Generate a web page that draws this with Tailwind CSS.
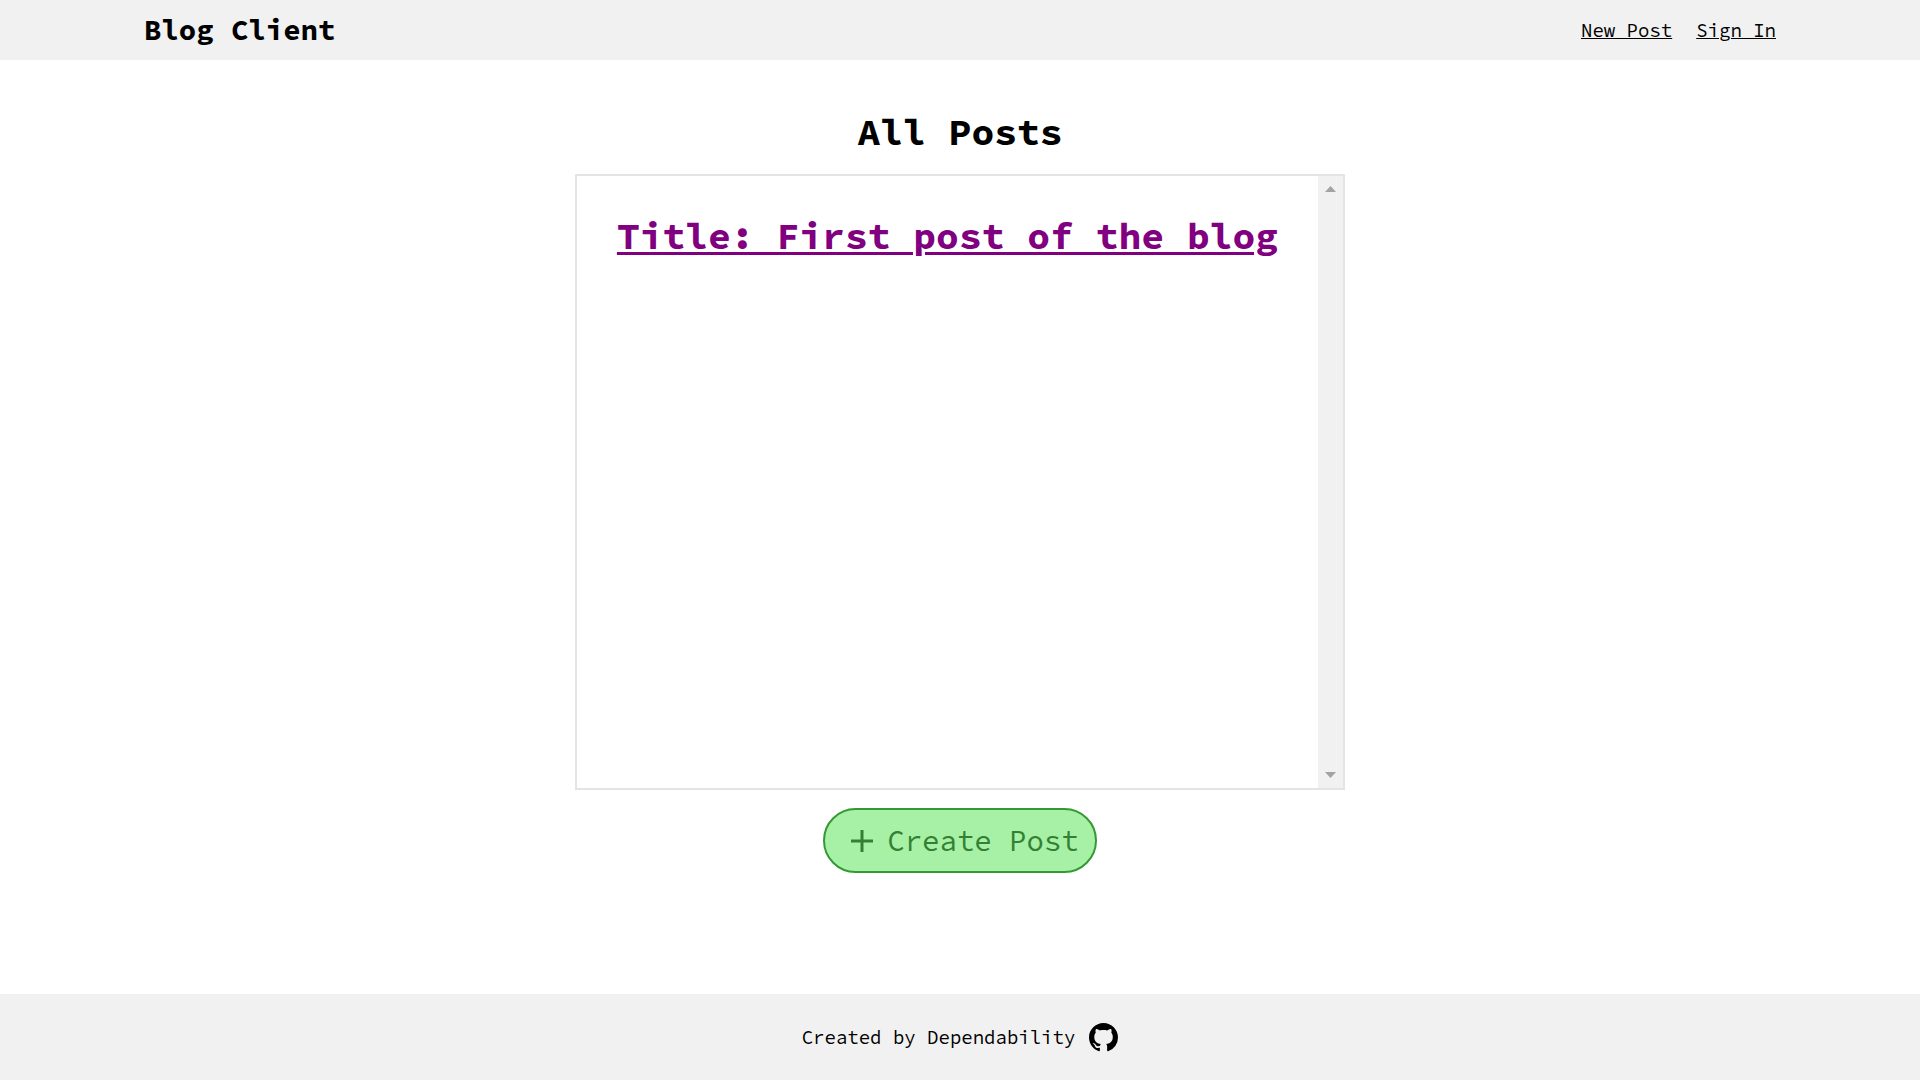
<!DOCTYPE html>
<html lang="en">
<head>
<meta charset="utf-8">
<meta name="viewport" content="width=device-width, initial-scale=1">
<title>Blog Client</title>
<script src="https://cdn.jsdelivr.net/npm/@tailwindcss/browser@4"></script>
</head>
<body class="flex min-h-screen flex-col bg-white font-['Source_Code_Pro','Liberation_Mono',monospace] text-[19px] leading-7 text-black">
  <header class="flex h-15 items-center justify-between bg-[#f1f1f1] px-[7.5%]">
    <h1 class="text-[29px] leading-10 font-bold">Blog Client</h1>
    <nav class="flex gap-6">
      <a href="#new" class="underline decoration-1 underline-offset-1">New Post</a>
      <a href="#signin" class="underline decoration-1 underline-offset-1">Sign In</a>
    </nav>
  </header>

  <main class="flex flex-1 flex-col items-center pt-11">
    <h2 class="text-[38px] leading-14 font-bold">All Posts</h2>
    <section class="mt-[14px] flex h-[616px] border-2 border-[#e4e4e4]">
      <div class="w-[741px] pt-8 text-center">
        <h3 class="text-[38px] leading-14 font-bold whitespace-nowrap">
          <a href="#post" class="text-[#800080] underline decoration-3 underline-offset-3">Title: First post of the blog</a>
        </h3>
      </div>
      <div class="flex w-[25px] flex-col items-center justify-between bg-[#f1f1f1] py-[10px]">
        <svg class="h-[6px] w-[11px] fill-[#a3a3a3]" viewBox="0 0 11 6" aria-hidden="true"><path d="M5.500 0 11 6H0z"/></svg>
        <svg class="h-[6px] w-[11px] fill-[#a3a3a3]" viewBox="0 0 11 6" aria-hidden="true"><path d="M0 0h11L5.500 6z"/></svg>
      </div>
    </section>
    <button class="mt-[18px] flex h-[65px] items-center gap-[14px] rounded-full border-2 border-[#339933] bg-[#a6f1a6] pr-4 pl-[26px] text-[29px] leading-10 text-[#338033]">
      <svg class="size-[22px] stroke-[#338033]" viewBox="0 0 22 22" fill="none" stroke-width="3" aria-hidden="true"><path d="M11 0v22M0 11h22"/></svg>
      <span>Create Post</span>
    </button>
  </main>

  <footer class="flex h-[86px] items-center justify-center gap-[14px] bg-[#f1f1f1]">
    <p>Created by Dependability</p>
    <a href="#github" aria-label="GitHub">
      <svg class="size-[29px]" viewBox="0 0 16 16" fill="currentColor" aria-hidden="true"><path d="M8 0C3.580 0 0 3.580 0 8c0 3.540 2.290 6.530 5.470 7.590.4.070.550-.170.550-.380 0-.190-.010-.820-.010-1.490-2.010.370-2.530-.490-2.690-.940-.090-.230-.480-.940-.820-1.130-.280-.150-.680-.520-.010-.530.630-.010 1.080.580 1.230.820.720 1.210 1.870.870 2.330.660.070-.520.280-.870.510-1.070-1.780-.2-3.640-.890-3.640-3.950 0-.870.310-1.590.820-2.150-.080-.2-.360-1.020.080-2.120 0 0 .670-.210 2.200.820.640-.180 1.320-.270 2-.270s1.360.090 2 .270c1.530-1.040 2.200-.820 2.200-.820.440 1.100.160 1.920.080 2.120.510.560.820 1.270.820 2.150 0 3.070-1.870 3.750-3.650 3.950.290.250.540.730.540 1.480 0 1.070-.010 1.930-.010 2.200 0 .210.150.460.550.380A8.010 8.010 0 0 0 16 8c0-4.420-3.580-8-8-8z"/></svg>
    </a>
  </footer>
</body>
</html>
